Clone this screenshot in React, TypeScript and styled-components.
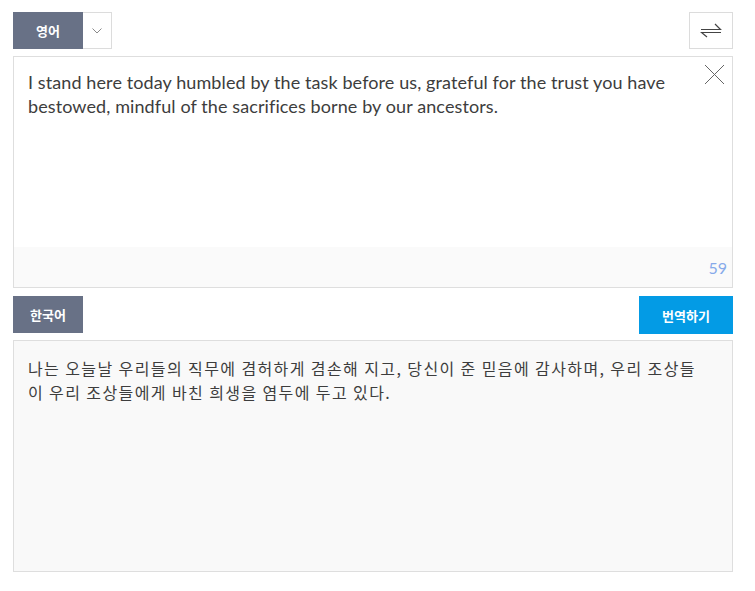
import React from "react";
import styled, { createGlobalStyle } from "styled-components";

const Global = createGlobalStyle`
  html, body { margin: 0; padding: 0; background: #fff; }
  body { font-family: Lato, "Noto Sans CJK KR", sans-serif; }
  * { box-sizing: border-box; }
`;

const Page = styled.div`
  width: 720px;
  margin: 12px 0 0 13px;
  display: flex;
  flex-direction: column;
`;

const Bar = styled.div<{ $mt?: number }>`
  display: flex;
  justify-content: space-between;
  align-items: stretch;
  height: 37px;
  margin-top: ${(p) => p.$mt || 0}px;
`;

const LangGroup = styled.div`
  display: flex;
`;

const LangButton = styled.div`
  width: 70px;
  height: 37px;
  background: #687186;
  color: #fff;
  font-family: "Noto Sans CJK KR", sans-serif;
  font-weight: 700;
  font-size: 13px;
  display: flex;
  align-items: center;
  justify-content: center;
`;

const DropButton = styled.div`
  width: 29px;
  height: 37px;
  border: 1px solid #dcdcdc;
  border-left: none;
  display: flex;
  align-items: center;
  justify-content: center;
`;

const IconButton = styled.div`
  width: 44px;
  height: 37px;
  border: 1px solid #dcdcdc;
  display: flex;
  align-items: center;
  justify-content: center;
`;

const ActionButton = styled.div`
  width: 94px;
  height: 38px;
  background: #039be5;
  color: #fff;
  font-family: "Noto Sans CJK KR", sans-serif;
  font-weight: 700;
  font-size: 13px;
  display: flex;
  align-items: center;
  justify-content: center;
`;

const Box = styled.div<{ $bg?: string; $mt: number }>`
  position: relative;
  margin-top: ${(p) => p.$mt}px;
  height: 232px;
  border: 1px solid #dedede;
  background: ${(p) => p.$bg || "#fff"};
  display: flex;
  flex-direction: column;
`;

const SourceText = styled.div`
  flex: 1;
  padding: 13px 50px 0 14px;
  font-family: Lato, sans-serif;
  font-size: 18px;
  letter-spacing: 0.1px;
  line-height: 24px;
  color: #3d3d3d;
`;

const TargetText = styled.div`
  padding: 15px 34px 0 14px;
  font-family: "Noto Sans CJK KR", sans-serif;
  font-size: 16px;
  line-height: 24px;
  letter-spacing: 1.4px;
  color: #3d3d3d;
  word-break: break-all;
`;

const Footer = styled.div`
  height: 40px;
  background: #fafafa;
  display: flex;
  align-items: center;
  justify-content: flex-end;
  padding-right: 5px;
  font-family: Lato, sans-serif;
  font-size: 16px;
  color: #86aaea;
`;

const Close = styled.div`
  position: absolute;
  top: 7px;
  right: 7px;
  width: 21px;
  height: 21px;
`;

export default function App() {
  return (
    <>
      <Global />
      <Page>
        <Bar>
          <LangGroup>
            <LangButton>영어</LangButton>
            <DropButton>
              <svg width="10" height="6" viewBox="0 0 10 6">
                <path d="M0.5 0.5 L5 5 L9.5 0.5" fill="none" stroke="#8a8a8a" strokeWidth="1" />
              </svg>
            </DropButton>
          </LangGroup>
          <IconButton>
            <svg width="22" height="17" viewBox="0 0 22 17">
              <path d="M1 7.5 H20.5 L15 2" fill="none" stroke="#444" strokeWidth="1.2" />
              <path d="M21 10.5 H1.5 L7 15" fill="none" stroke="#444" strokeWidth="1.2" />
            </svg>
          </IconButton>
        </Bar>
        <Box $mt={7}>
          <SourceText>
            I stand here today humbled by the task before us, grateful for the trust you have bestowed, mindful of the sacrifices borne by our ancestors.
          </SourceText>
          <Footer>59</Footer>
          <Close>
            <svg width="21" height="21" viewBox="0 0 21 21">
              <path d="M1 1 L20 20 M20 1 L1 20" stroke="#666" strokeWidth="1" />
            </svg>
          </Close>
        </Box>
        <Bar $mt={8}>
          <LangButton>한국어</LangButton>
          <ActionButton>번역하기</ActionButton>
        </Bar>
        <Box $mt={7} $bg="#f9f9f9">
          <TargetText>
            나는 오늘날 우리들의 직무에 겸허하게 겸손해 지고, 당신이 준 믿음에 감사하며, 우리 조상들이 우리 조상들에게 바친 희생을 염두에 두고 있다.
          </TargetText>
        </Box>
      </Page>
    </>
  );
}
